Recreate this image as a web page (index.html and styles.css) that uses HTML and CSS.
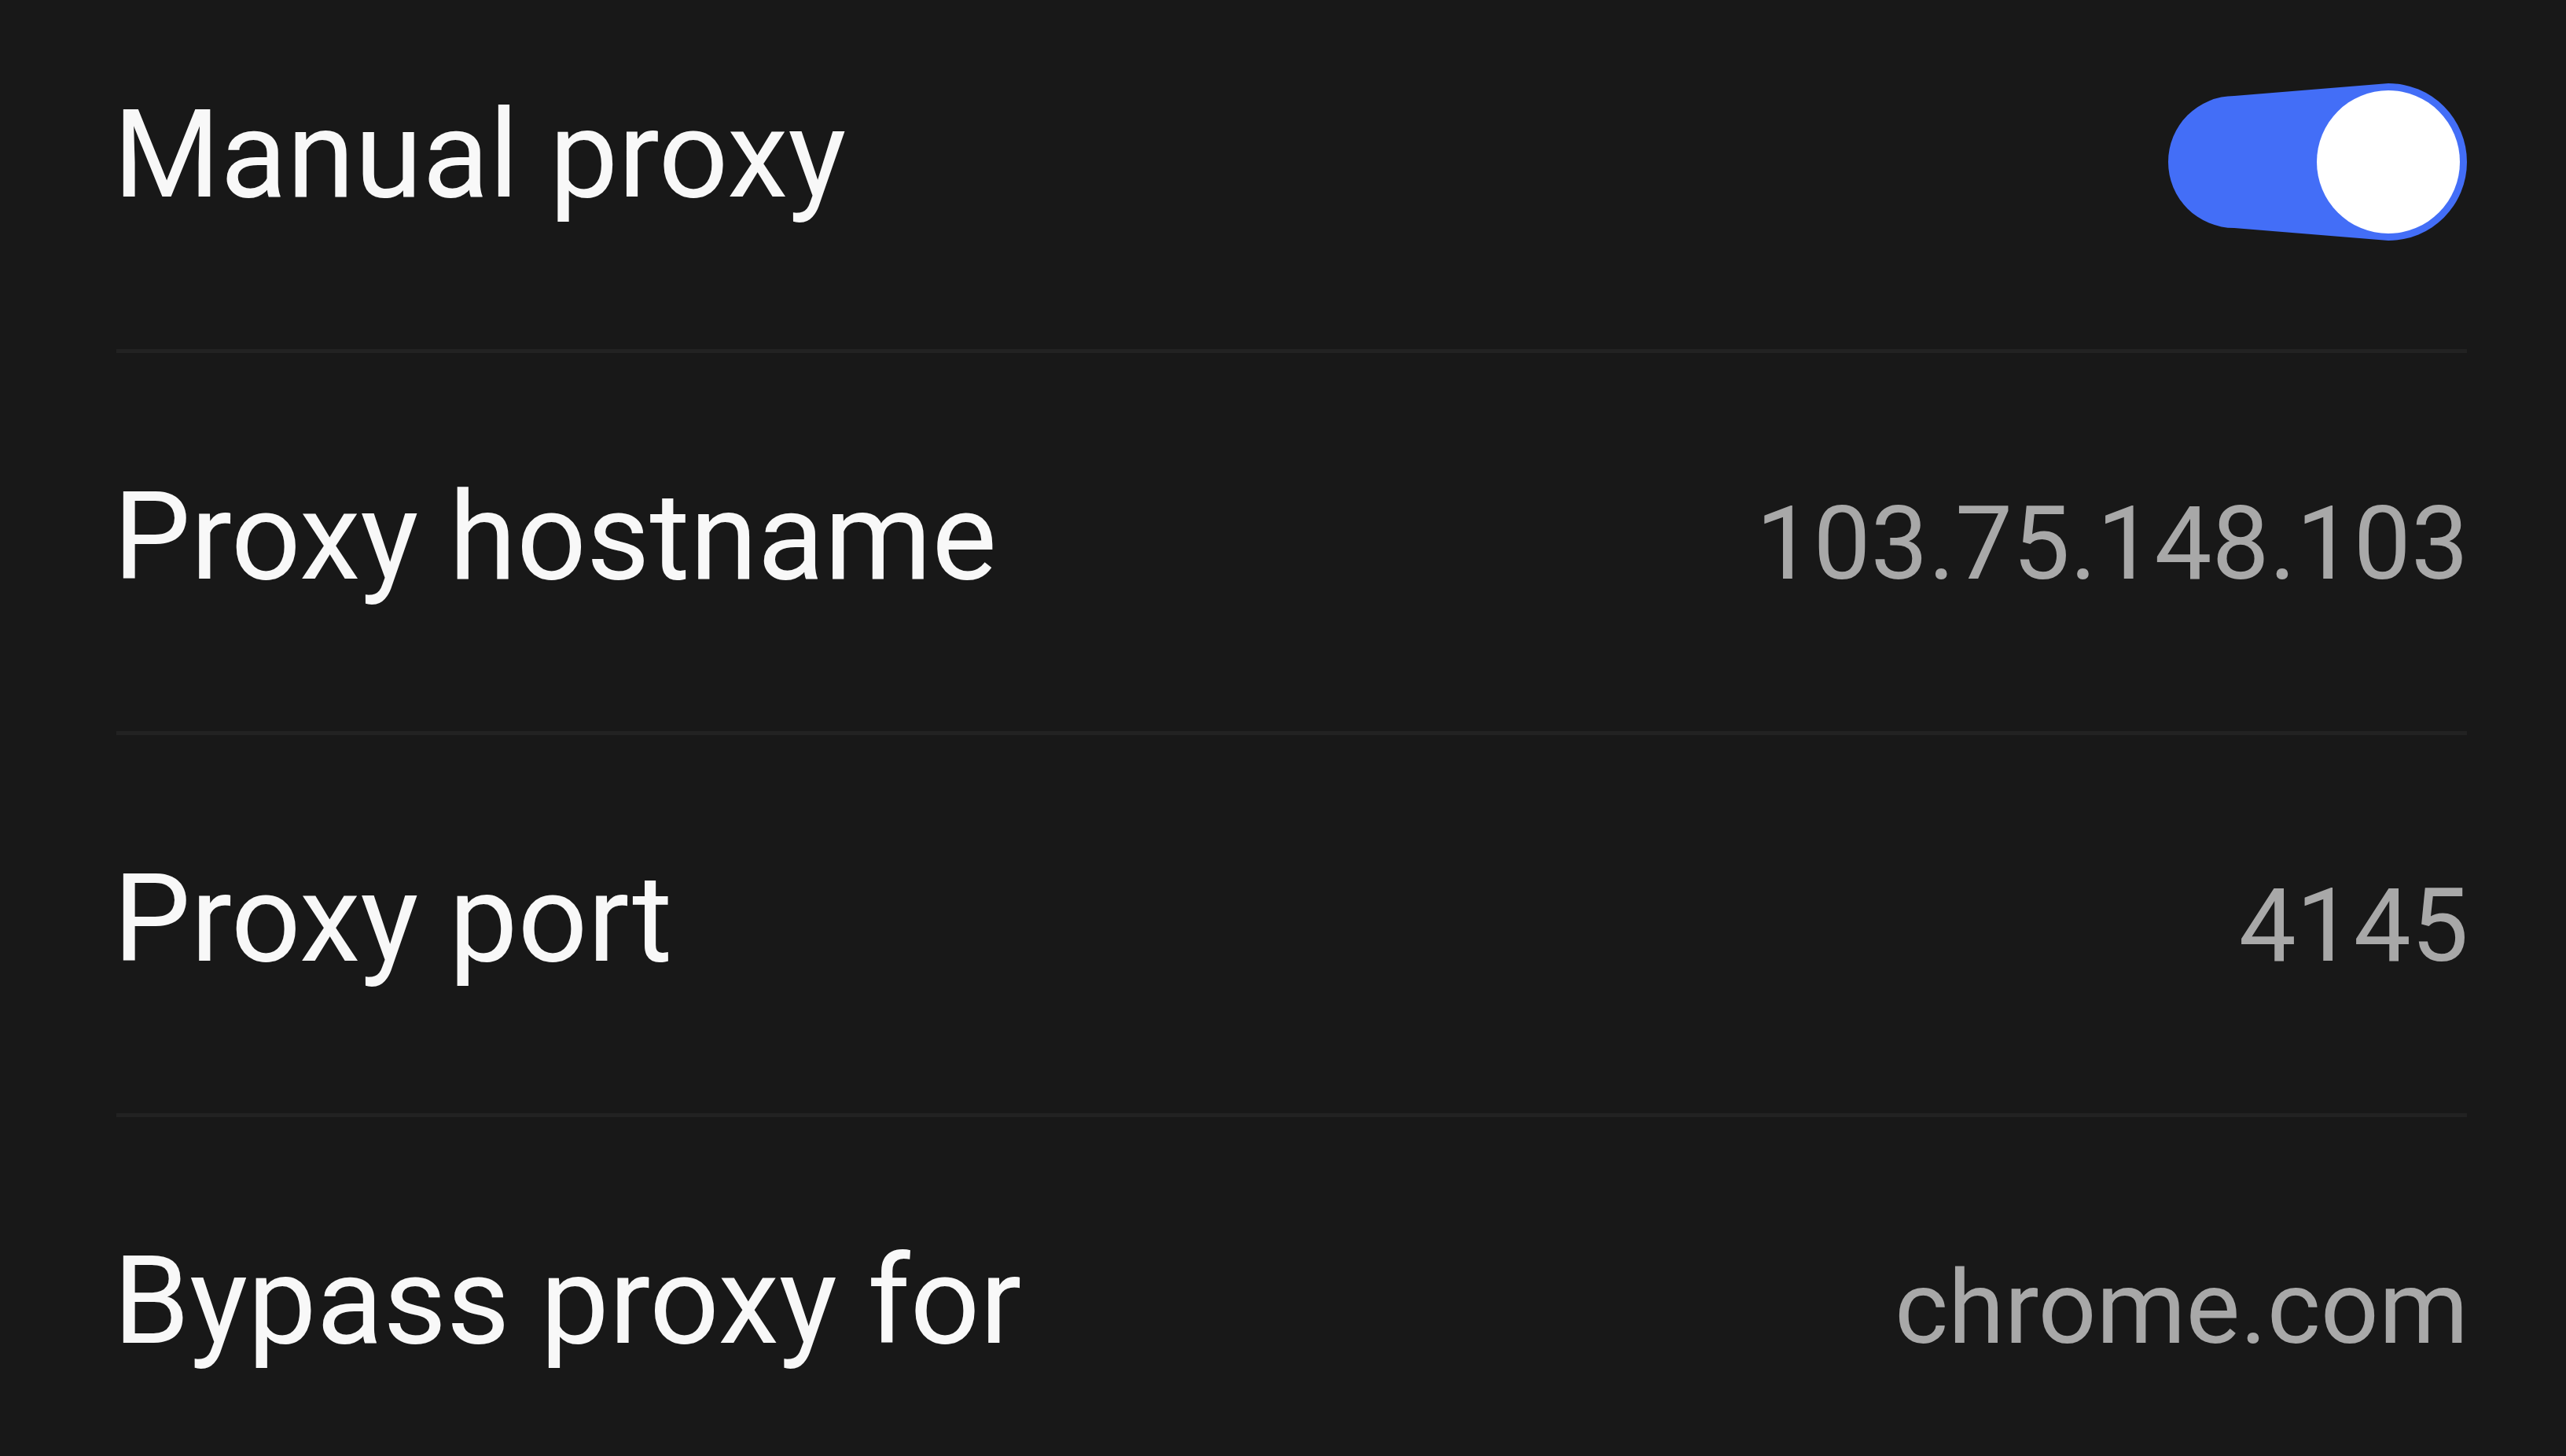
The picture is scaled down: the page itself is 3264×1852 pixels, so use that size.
FILE: index.html
```html
<!DOCTYPE html>
<html lang="en">
<head>
    <meta charset="UTF-8">
    <title>Proxy</title>
    <link rel="stylesheet" href="styles.css">
</head>
<body>
<div class="list">
    <div class="row">
        <div class="title">Manual proxy</div>
        <svg class="toggle" width="392" height="212" viewBox="0 0 392 212">
            <path d="M94 22 L290 6 A100 100 0 0 1 290 206 L94 190 A84 84 0 0 1 94 22 Z" fill="#436ef7"/>
            <circle cx="290" cy="106" r="91" fill="#ffffff"/>
        </svg>
    </div>
    <div class="row">
        <div class="title">Proxy hostname</div>
        <div class="value">103.75.148.103</div>
    </div>
    <div class="row">
        <div class="title">Proxy port</div>
        <div class="value">4145</div>
    </div>
    <div class="row">
        <div class="title">Bypass proxy for</div>
        <div class="value">chrome.com</div>
    </div>
</div>
</body>
</html>
```

FILE: styles.css
```css
*{
    margin: 0;
    padding: 0;
}
html, body{
    background-color: #181818;
    height: 100%;
    overflow: hidden;
}
body{
    font-family: Roboto, "Noto Sans", sans-serif;
}
.list{
    margin-top: -37px;
}
.row{
    display: flex;
    justify-content: space-between;
    align-items: baseline;
    box-sizing: border-box;
    height: 486px;
    padding-top: 142px;
    margin: 0 126px 0 148px;
    border-bottom: 5px solid #222222;
}
.title{
    font-size: 156px;
    color: #f8f8f8;
    margin-left: -4px;
}
.value{
    font-size: 130px;
    color: #a8a8a8;
    margin-right: -2px;
}
.toggle{
    align-self: flex-start;
    margin-top: -5px;
    margin-right: -2px;
}
```
